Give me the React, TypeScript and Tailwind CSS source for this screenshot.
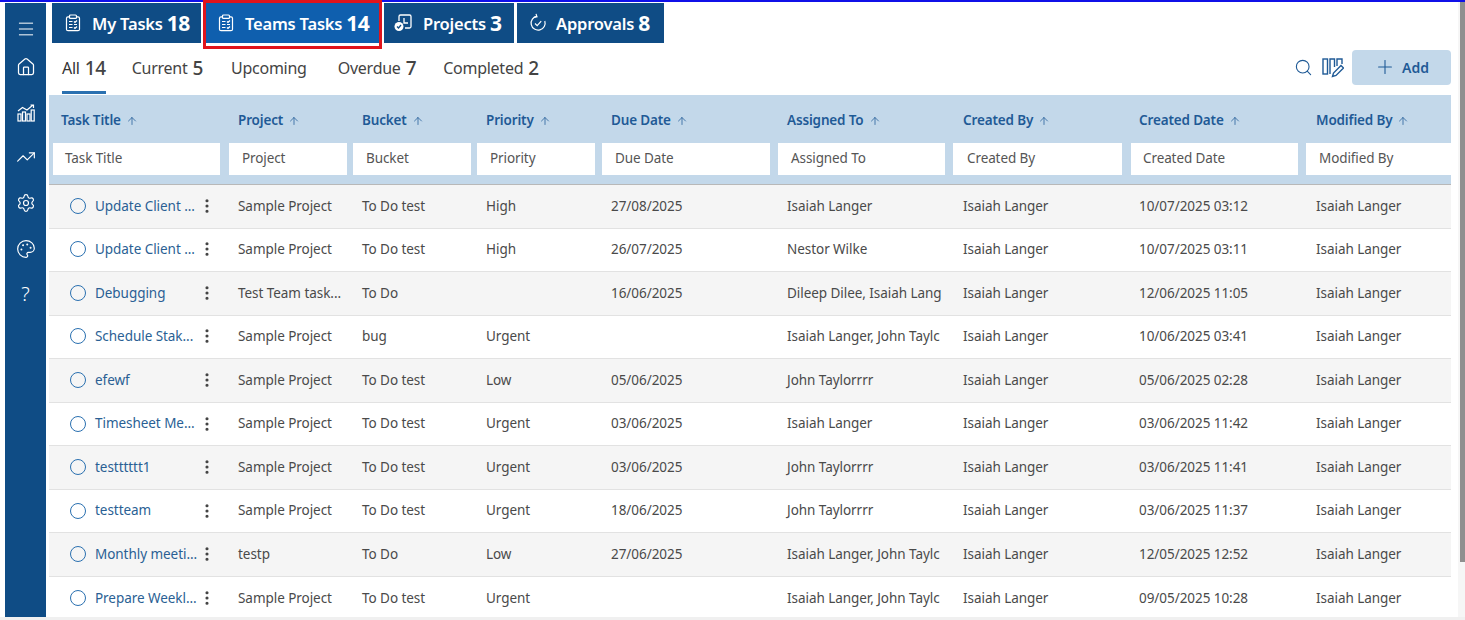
import { ArrowUp, Home, Menu, MoreVertical, Palette, Plus, Search, Settings, TrendingUp } from "lucide-react"

const columns = ["Task Title", "Project", "Bucket", "Priority", "Due Date", "Assigned To", "Created By", "Created Date", "Modified By"]

const gridCols = "grid grid-cols-[176px_124px_124px_125px_176px_175px_178px_175px_1fr] pl-1"

// gaps and text offsets differ a little per column in the reference
const headPad = ["pl-2", "pl-[9px]", "pl-[9px]", "pl-[9px]", "pl-[9px]", "pl-[9px]", "pl-[10px]", "pl-2", "pl-[10px]"]
const inputGap = ["mr-[9px]", "mr-[6px]", "mr-[6px]", "mr-[7px]", "mr-2", "mr-2", "mr-[9px]", "mr-2", "mr-0"]
const inputPad = ["pl-3", "pl-[13px]", "pl-[13px]", "pl-[13px]", "pl-[13px]", "pl-[13px]", "pl-[14px]", "pl-[12px]", "pl-[13px]"]
const cellPad = ["pl-[9px]", "pl-[9px]", "pl-[9px]", "pl-[9px]", "pl-[9px]", "pl-[10px]", "pl-2", "pl-[10px]"]

const rows = [
  ["Update Client ...", "Sample Project", "To Do test", "High", "27/08/2025", "Isaiah Langer", "Isaiah Langer", "10/07/2025 03:12", "Isaiah Langer"],
  ["Update Client ...", "Sample Project", "To Do test", "High", "26/07/2025", "Nestor Wilke", "Isaiah Langer", "10/07/2025 03:11", "Isaiah Langer"],
  ["Debugging", "Test Team task...", "To Do", "", "16/06/2025", "Dileep Dilee, Isaiah Lang", "Isaiah Langer", "12/06/2025 11:05", "Isaiah Langer"],
  ["Schedule Stak...", "Sample Project", "bug", "Urgent", "", "Isaiah Langer, John Taylc", "Isaiah Langer", "10/06/2025 03:41", "Isaiah Langer"],
  ["efewf", "Sample Project", "To Do test", "Low", "05/06/2025", "John Taylorrrr", "Isaiah Langer", "05/06/2025 02:28", "Isaiah Langer"],
  ["Timesheet Me...", "Sample Project", "To Do test", "Urgent", "03/06/2025", "Isaiah Langer", "Isaiah Langer", "03/06/2025 11:42", "Isaiah Langer"],
  ["testttttt1", "Sample Project", "To Do test", "Urgent", "03/06/2025", "John Taylorrrr", "Isaiah Langer", "03/06/2025 11:41", "Isaiah Langer"],
  ["testteam", "Sample Project", "To Do test", "Urgent", "18/06/2025", "John Taylorrrr", "Isaiah Langer", "03/06/2025 11:37", "Isaiah Langer"],
  ["Monthly meeti...", "testp", "To Do", "Low", "27/06/2025", "Isaiah Langer, John Taylc", "Isaiah Langer", "12/05/2025 12:52", "Isaiah Langer"],
  ["Prepare Weekl...", "Sample Project", "To Do test", "Urgent", "", "Isaiah Langer, John Taylc", "Isaiah Langer", "09/05/2025 10:28", "Isaiah Langer"],
]

function ClipboardIcon() {
  return (
    <svg width="16" height="18" viewBox="0 0 16 18" fill="none" stroke="currentColor" strokeWidth="1.2" className="mr-[11px]">
      <path d="M4.5 2.8H3A1.5 1.5 0 0 0 1.5 4.3v10.9A1.5 1.5 0 0 0 3 16.7h10a1.5 1.5 0 0 0 1.5-1.5V4.3A1.5 1.5 0 0 0 13 2.8h-1.5" />
      <rect x="4.5" y="1" width="7" height="3.4" rx="1" />
      <path d="M4 7.5h3.5M9 7.5l1 1 2-2M4 10.5h3.5M9 10.5h3M4 13.5h3.5M9 13.5l1 1 2-2" />
    </svg>
  )
}

function BarsIcon() {
  return (
    <svg width="20" height="20" viewBox="0 0 20 20" fill="none" stroke="currentColor" strokeWidth="1.2" className="mt-[26px]">
      <rect x="2" y="11" width="3" height="7" />
      <rect x="6.5" y="9" width="3" height="9" />
      <rect x="11" y="11" width="3" height="7" />
      <rect x="15.2" y="7" width="3" height="11" />
      <path d="M2 8l4.5-3.5L11 7l6-5M14.5 2H17.5V5" />
    </svg>
  )
}

function ProjectIcon() {
  return (
    <svg width="20" height="20" viewBox="0 0 20 20" fill="none" stroke="currentColor" strokeWidth="1.3">
      <path d="M6 8V3.5A1.5 1.5 0 0 1 7.5 2h9A1.5 1.5 0 0 1 18 3.5v10a1.5 1.5 0 0 1-1.5 1.5H12" />
      <path d="M11 5v5h4" />
      <circle cx="6" cy="13.5" r="4.5" fill="currentColor" stroke="none" />
      <path d="M4 13.5l1.5 1.5 2.5-3" stroke="#0f4c85" />
    </svg>
  )
}

function ApprovalIcon() {
  return (
    <svg width="20" height="20" viewBox="0 0 20 20" fill="none" stroke="currentColor" strokeWidth="1.2">
      <path d="M9 3.2A7 7 0 1 0 16.8 8" />
      <path d="M6 3.5l3-.6-1-3" transform="translate(0 1)" />
      <path d="M7 10.5l2.2 2.2 4-4.5" />
    </svg>
  )
}

function ColumnsEditIcon() {
  return (
    <svg width="22" height="22" viewBox="0 0 22 22" fill="none" stroke="#1f5a96" strokeWidth="1.4">
      <rect x="1" y="3" width="4.5" height="15" />
      <path d="M8 18V3h4.5v8" />
      <path d="M15 10V3h5v5" />
      <path d="M10.5 20.5l1-3.5 7.5-7.5 2.5 2.5-7.5 7.5z" />
    </svg>
  )
}

function TopTab({ icon, label, count, active, className }: { icon: React.ReactNode; label: string; count: number; active?: boolean; className: string }) {
  return (
    <div className={`flex h-10 items-center text-white ${active ? "bg-[#0f5fae]" : "bg-[#0f4c85]"} ${className}`}>
      {icon}
      <span className="pt-[2px] text-[16.5px] font-semibold tracking-[-0.2px]">{label}</span>
      <span className="ml-[4px] pt-px text-[21px] font-bold tracking-[-0.5px]">{count}</span>
    </div>
  )
}

function SubTab({ label, count, active }: { label: string; count?: number; active?: boolean }) {
  return (
    <div className="relative flex h-full items-center pb-[2px] text-[16px] tracking-[-0.25px] text-[#444]">
      <span className={active ? "text-[#333]" : ""}>{label}</span>
      {count !== undefined && <span className="ml-[5px] text-[19px] font-medium tracking-[-0.4px] text-[#444]">{count}</span>}
      {active && <div className="absolute bottom-[1px] left-0 right-0 h-[3px] bg-[#2a70b0]" />}
    </div>
  )
}

export default function App() {
  return (
    <div className="relative flex h-[620px] w-[1465px] flex-col overflow-hidden bg-white font-['Noto_Sans',sans-serif] text-[13.5px]">
      <div className="h-[2px] shrink-0 bg-[#1010e8]" />
      <div className="flex min-h-0 flex-1 pb-[3px] pl-[5px]">
        <aside className="mt-px flex w-[41px] shrink-0 flex-col items-center bg-[#0f4c85] pt-4 text-white">
          <Menu size={20} strokeWidth={1.2} />
          <Home size={20} strokeWidth={1.5} className="mt-[18px]" />
          <BarsIcon />
          <TrendingUp size={20} strokeWidth={1.4} className="mt-[24px]" />
          <Settings size={20} strokeWidth={1.4} className="mt-[26px]" />
          <Palette size={20} strokeWidth={1.4} className="mt-[26px]" />
          <span className="mt-[22px] text-[20px] leading-[26px] font-light">?</span>
        </aside>

        <main className="min-w-0 flex-1 pl-[3px]">
          <div className="mt-px flex pl-[3px]">
            <TopTab className="w-[149px] pl-[13px]" icon={<ClipboardIcon />} label="My Tasks" count={18} />
            <div className="relative ml-[4px]">
              <TopTab active className="w-[174px] pl-[13px]" icon={<ClipboardIcon />} label="Teams Tasks" count={14} />
              <div className="absolute -top-[3px] -left-[2px] h-[49px] w-[179px] border-[3.5px] border-[#e0141c]" />
            </div>
            <TopTab className="ml-[5px] w-[130px] pl-[9px]" icon={<span className="mr-[10px]"><ProjectIcon /></span>} label="Projects" count={3} />
            <TopTab className="ml-[3px] w-[147px] pl-[11px]" icon={<span className="mr-[8px]"><ApprovalIcon /></span>} label="Approvals" count={8} />
          </div>

          <div className="flex h-[52px] items-stretch pr-[14px]">
            <div className="flex items-stretch gap-[26px] pl-[13px]">
              <SubTab label="All" count={14} active />
              <SubTab label="Current" count={5} />
              <div className="ml-[2px] mr-[5px]"><SubTab label="Upcoming" /></div>
              <SubTab label="Overdue" count={7} />
              <div className="ml-px"><SubTab label="Completed" count={2} /></div>
            </div>
            <div className="ml-auto flex items-center pb-[4px]">
              <Search size={19} strokeWidth={1.4} className="mr-[9px] text-[#1f5a96]" />
              <ColumnsEditIcon />
              <button className="ml-[8px] flex h-[35px] w-[99px] items-center justify-center gap-[6px] rounded-[4px] bg-[#c3d8ea] text-[14px] font-semibold text-[#1f5a96]">
                <Plus size={22} strokeWidth={1.2} />
                Add
              </button>
            </div>
          </div>

          <div className="w-[1402px]">
            <div className="h-[90px] border-b border-[#b8b8b8] bg-[#c3d8ea]">
              <div className={`${gridCols} h-[48px] items-center pt-[3px]`}>
                {columns.map((c, i) => (
                  <div key={c} className={`flex items-center text-[13.5px] font-semibold tracking-[-0.15px] text-[#1f5a96] ${headPad[i]}`}>
                    {c}
                    <ArrowUp size={12} strokeWidth={1.5} className="ml-[5px]" />
                  </div>
                ))}
              </div>
              <div className={gridCols}>
                {columns.map((c, i) => (
                  <div key={c} className={`flex h-8 items-center bg-white pb-[2px] tracking-[-0.1px] text-[#555] ${inputGap[i]} ${inputPad[i]}`}>
                    {c}
                  </div>
                ))}
              </div>
            </div>

            {rows.map((r, i) => (
              <div key={i} className={`${gridCols} h-[43.55px] items-center border-b border-[#e2e2e2] pb-px tracking-[-0.05px] text-[#4a4a4a] ${i % 2 === 0 ? "bg-[#f5f5f5]" : "bg-white"}`}>
                <div className="flex items-center pl-[17px]">
                  <div className="h-4 w-4 shrink-0 rounded-full border border-[#2a70b0]" />
                  <span className="ml-[9px] w-[104px] whitespace-nowrap text-[#2a5f94]">{r[0]}</span>
                  <MoreVertical size={18} strokeWidth={2.2} className="ml-[-1px] shrink-0 text-[#444]" />
                </div>
                {r.slice(1).map((v, j) => (
                  <div key={j} className={`overflow-hidden whitespace-nowrap ${cellPad[j]}`}>{v}</div>
                ))}
              </div>
            ))}
          </div>
        </main>
      </div>
      <div className="absolute right-0 top-[2px] h-[616px] w-[7px] bg-[#f6f6f6]">
        <div className="ml-[2px] h-[560px] w-[5px] bg-[#8f8f8f]" />
      </div>
      <div className="absolute bottom-0 left-0 h-[3px] w-full bg-[#f0f0f0]" />
    </div>
  )
}
